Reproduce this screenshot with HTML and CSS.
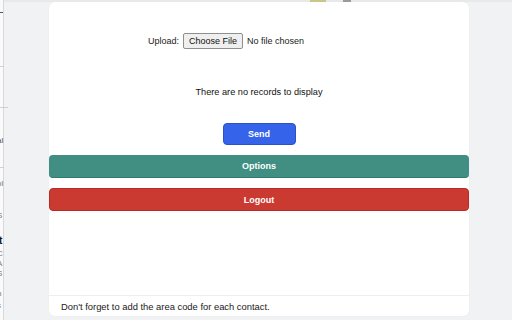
FILE: index.html
```html
<!DOCTYPE html>
<html>
<head>
<meta charset="utf-8">
<link rel="stylesheet" href="styles.css">
</head>
<body>
  <div class="topbar">
    <span class="tb-seg tb-olive"></span>
    <span class="tb-seg tb-grey"></span>
  </div>
  <aside class="page-strip">
    <div class="ps-line l1"></div>
    <div class="ps-line l2"></div>
    <div class="ps-text t1">al</div>
    <div class="ps-line l3"></div>
    <div class="ps-text t2">ol</div>
    <div class="ps-line l4"></div>
    <div class="ps-text t3">S</div>
    <div class="ps-text t4">t</div>
    <div class="ps-text t5">C</div>
    <div class="ps-text t6">A</div>
    <div class="ps-text t7">S</div>
    <div class="ps-text t8">n</div>
    <div class="ps-text t9">s</div>
  </aside>
  <main class="popup">
    <div class="upload-row">
      <span class="label">Upload:</span>
      <span class="file-btn">Choose File</span>
      <span class="file-name">No file chosen</span>
    </div>
    <p class="empty">There are no records to display</p>
    <div class="send-wrap"><button class="btn btn-send">Send</button></div>
    <button class="btn btn-wide btn-options">Options</button>
    <button class="btn btn-wide btn-logout">Logout</button>
    <div class="spacer"></div>
    <footer class="note">Don't forget to add the area code for each contact.</footer>
  </main>
</body>
</html>
```
FILE: styles.css
```css
* { box-sizing: border-box; }
html, body { margin: 0; padding: 0; }
body {
  width: 512px;
  height: 320px;
  background: #f1f2f4;
  font-family: "Liberation Sans", Arial, sans-serif;
  color: #1f1f1f;
  display: flex;
  position: relative;
  overflow: hidden;
}
.topbar {
  position: absolute;
  top: 0; left: 0; right: 0;
  height: 2px;
  background: #e9e9ea;
}
.tb-seg { position: absolute; top: 0; height: 2px; }
.tb-olive { left: 310px; width: 16px; background: #c9c68a; }
.tb-grey { left: 343px; width: 8px; background: #9a9a9a; }
.page-strip {
  width: 4px;
  flex: none;
  background: #fafafa;
  border-right: 1px solid #d9d9db;
  position: relative;
  overflow: visible;
}
.ps-line { position: absolute; left: 0; width: 4px; height: 1px; background: #cfcfd1; }
.l1 { top: 12px; background: #555; width: 3px; }
.l2 { top: 66px; }
.l3 { top: 107px; width: 8px; }
.l4 { top: 167px; }
.ps-text {
  position: absolute;
  left: -3px;
  font-size: 8px;
  color: #777;
  line-height: 8px;
}
.t1 { top: 137px; color: #555; }
.t2 { top: 180px; }
.t3 { top: 212px; }
.t4 { top: 237px; left: -1px; font-weight: bold; color: #111; font-size: 10px; }
.t5 { top: 250px; }
.t6 { top: 260px; }
.t7 { top: 270px; }
.t8 { top: 290px; }
.t9 { top: 302px; }
.popup {
  margin: 2px 0 0 45px;
  width: 420px;
  height: 314px;
  background: #fff;
  border-radius: 6px;
  display: flex;
  flex-direction: column;
  box-shadow: 0 0 1px rgba(0,0,0,0.08);
}
.upload-row {
  margin: 31px 0 0 99px;
  height: 16px;
  display: flex;
  align-items: center;
  font-size: 9px;
  color: #222;
}
.label { margin-right: 4px; }
.file-btn {
  height: 16px;
  padding: 0 5px;
  display: flex;
  align-items: center;
  background: #efefef;
  border: 1px solid #8f8f8f;
  border-radius: 2px;
  margin-right: 4px;
  color: #111;
}
.empty {
  margin: 37px 0 0;
  font-size: 9.2px;
  line-height: 12px;
  text-align: center;
  color: #111;
}
.send-wrap {
  margin-top: 25px;
  display: flex;
  justify-content: center;
}
.btn {
  font-family: "Liberation Sans", Arial, sans-serif;
  border: none;
  color: #fff;
  font-weight: bold;
  font-size: 9px;
  border-radius: 4px;
  padding: 0;
  display: flex;
  align-items: center;
  justify-content: center;
}
.btn-send {
  width: 73px;
  height: 22px;
  background: #3563e9;
  border: 1px solid #2a52c8;
}
.btn-wide {
  width: 420px;
  height: 23px;
}
.btn-options {
  margin-top: 10px;
  background: #408f82;
  border-bottom: 1px solid #2f7c6f;
}
.btn-logout {
  margin-top: 10px;
  background: #cb3a31;
  border: 1px solid #b82b24;
}
.spacer { flex: 1; }
.note {
  height: 21px;
  border-top: 1px solid #eeeeef;
  padding-left: 12px;
  display: flex;
  align-items: center;
  font-size: 9.4px;
  color: #1a1a1a;
}
```
